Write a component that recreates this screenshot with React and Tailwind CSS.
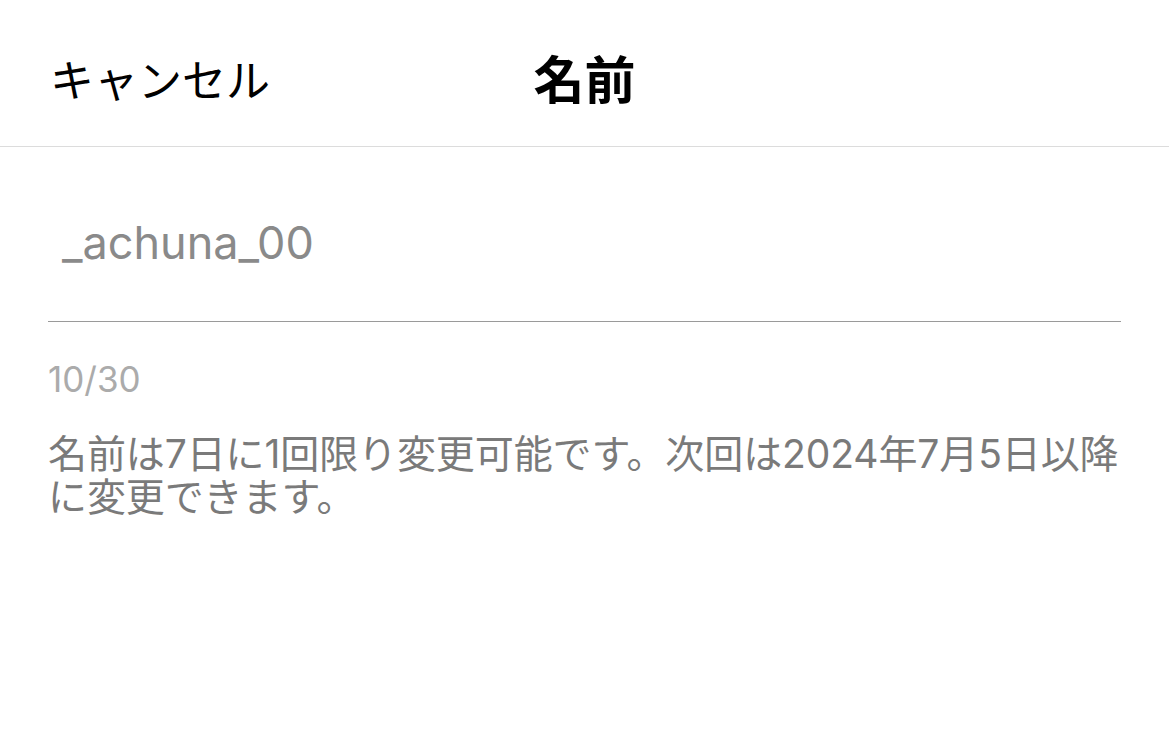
import React from 'react';

const jp = { fontFamily: 'Inter, "Noto Sans CJK JP", sans-serif' };

export default function App() {
  return (
    <div className="min-h-screen w-full bg-white" style={jp}>
      {/* Header */}
      <header className="relative flex h-[147px] items-center border-b border-[#dcdcdc] px-[50px] pt-[16px]">
        <button className="text-[44px] leading-none text-black">キャンセル</button>
        <h1 className="absolute left-1/2 top-[55px] -translate-x-1/2 text-[51px] font-bold leading-none text-black">名前</h1>
      </header>

      <main className="px-[48px]">
        {/* Name field */}
        <div className="flex h-[175px] items-center border-b border-[#9a9a9a] pl-[14px] pt-[16px]">
          <span className="text-[45px] leading-none text-[#8a8a8a]">_achuna_00</span>
        </div>

        <p className="mt-[40px] text-[35px] leading-none text-[#ababab]">10/30</p>

        <p className="mt-[35px] whitespace-nowrap text-[39px] leading-[43px] tracking-[-0.1px] text-[#7a7a7a]">
          名前は7日に1回限り変更可能です。次回は2024年7月5日以降
          <br />
          に変更できます。
        </p>
      </main>
    </div>
  );
}
